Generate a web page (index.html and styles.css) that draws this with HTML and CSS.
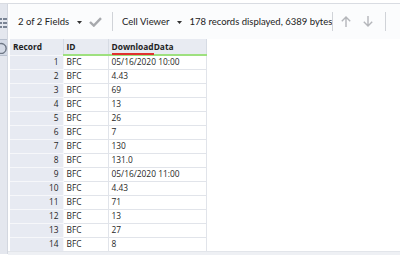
FILE: index.html
```html
<!DOCTYPE html>
<html lang="en">
<head>
  <meta charset="UTF-8" />
  <title>Results</title>
  <link rel="stylesheet" href="styles.css">
</head>
<body>
  <div class="app">
    <div class="sidebar">
      <span class="side-btn">
        <svg width="8" height="11" viewBox="0 0 8 11"><g fill="#7a8494"><rect x="0" y="0" width="3" height="2"/><rect x="4" y="0" width="4" height="2"/><rect x="0" y="4" width="3" height="2"/><rect x="4" y="4" width="4" height="2"/><rect x="0" y="8" width="3" height="2"/><rect x="4" y="8" width="4" height="2"/></g></svg>
      </span>
      <span class="side-btn active">
        <svg width="8" height="12" viewBox="0 0 8 12"><path d="M0 2 A5 5 0 1 1 0 11" fill="none" stroke="#6f7886" stroke-width="1.4"/></svg>
      </span>
    </div>

    <div class="main">
      <div class="toolbar">
        <span class="tb-text">2 of 2 Fields</span>
        <svg class="caret" width="5" height="3" viewBox="0 0 5 3"><path d="M0 0 H5 L2.5 3 Z" fill="#333"/></svg>
        <svg class="check" width="13" height="10" viewBox="0 0 13 10"><path d="M1 5 L4.8 8.6 L12 1.2" fill="none" stroke="#a7a9ad" stroke-width="2.4"/></svg>
        <span class="sep"></span>
        <span class="tb-text">Cell Viewer</span>
        <svg class="caret" width="5" height="3" viewBox="0 0 5 3"><path d="M0 0 H5 L2.5 3 Z" fill="#333"/></svg>
        <span class="tb-text">178 records displayed, 6389 bytes</span>
        <span class="sep"></span>
        <svg class="arrow up" width="10" height="11" viewBox="0 0 10 11"><path d="M5 11 V1 M0.8 5.2 L5 1 L9.2 5.2" fill="none" stroke="#b4b6ba" stroke-width="1.4"/></svg>
        <svg class="arrow" width="10" height="11" viewBox="0 0 10 11"><path d="M5 0 V10 M0.8 5.8 L5 10 L9.2 5.8" fill="none" stroke="#b4b6ba" stroke-width="1.4"/></svg>
        <span class="sep last"></span>
      </div>

      <table class="grid">
        <thead>
          <tr>
            <th class="rec">Record</th>
            <th class="col ok">ID</th>
            <th class="col ok"><span class="warn">Download</span>Data</th>
          </tr>
        </thead>
        <tbody>
          <tr><td class="rec">1</td><td>BFC</td><td>05/16/2020 10:00</td></tr>
          <tr><td class="rec">2</td><td>BFC</td><td>4.43</td></tr>
          <tr><td class="rec">3</td><td>BFC</td><td>69</td></tr>
          <tr><td class="rec">4</td><td>BFC</td><td>13</td></tr>
          <tr><td class="rec">5</td><td>BFC</td><td>26</td></tr>
          <tr><td class="rec">6</td><td>BFC</td><td>7</td></tr>
          <tr><td class="rec">7</td><td>BFC</td><td>130</td></tr>
          <tr><td class="rec">8</td><td>BFC</td><td>131.0</td></tr>
          <tr><td class="rec">9</td><td>BFC</td><td>05/16/2020 11:00</td></tr>
          <tr><td class="rec">10</td><td>BFC</td><td>4.43</td></tr>
          <tr><td class="rec">11</td><td>BFC</td><td>71</td></tr>
          <tr><td class="rec">12</td><td>BFC</td><td>13</td></tr>
          <tr><td class="rec">13</td><td>BFC</td><td>27</td></tr>
          <tr><td class="rec">14</td><td>BFC</td><td>8</td></tr>
        </tbody>
      </table>
    </div>
  </div>
  <div class="hscroll"></div>
</body>
</html>
```

FILE: styles.css
```css
* {
  box-sizing: border-box;
}

html, body {
  margin: 0;
  padding: 0;
  height: 100%;
  overflow: hidden;
  background: #fff;
  font-family: 'Open Sans', 'Noto Sans', sans-serif;
  color: #1f1f1f;
}

.app {
  display: flex;
  height: 251px;
  border-top: 1px solid #d9dce2;
  margin-top: 3px;
}

.sidebar {
  width: 8px;
  background: #e4e7ee;
  border-right: 1px solid #d3d7df;
  display: flex;
  flex-direction: column;
  align-items: flex-end;
  padding-top: 12px;
  gap: 9px;
}

.side-btn {
  display: flex;
  align-items: center;
  justify-content: flex-end;
  width: 8px;
  height: 14px;
}

.side-btn.active {
  height: 17px;
  background: #d4dae6;
  border-top: 1px solid #b9c1cf;
  border-bottom: 1px solid #b9c1cf;
}

.main {
  flex: 1;
  display: flex;
  flex-direction: column;
  padding-left: 2px;
}

.toolbar {
  height: 35px;
  display: flex;
  align-items: center;
  padding-left: 8px;
  background: #fbfcfd;
  font-family: Lato, 'Open Sans', sans-serif;
  font-size: 9.5px;
  color: #222;
}

.tb-text {
  white-space: nowrap;
}

.caret {
  margin: 1px 7px 0 8px;
  flex: none;
}

.check {
  margin: 0 10px 0 0;
  flex: none;
}

.sep {
  width: 1px;
  height: 19px;
  background: #d0d3d8;
  margin: 0 9px 0 0;
  flex: none;
}

.arrow {
  flex: none;
  margin-right: 12px;
}

.arrow.up {
  margin-left: -1px;
}

.grid {
  border-collapse: collapse;
  font-size: 8.4px;
  width: 197px;
  table-layout: fixed;
}

.grid th {
  height: 16px;
  text-align: left;
  font-weight: 700;
  background: #e8ebf2;
  padding: 0 0 0 3px;
  border-right: 1px solid #d6dbe4;
  white-space: nowrap;
}

.grid th.rec {
  width: 53px;
}

.grid th.col {
  border-bottom: 2px solid #9ee07f;
}

.grid th:nth-child(2) {
  width: 45px;
}

.warn {
  border-bottom: 2px solid #e03030;
  margin-bottom: -3px;
  display: inline-block;
  line-height: 12px;
}

.grid td {
  height: 14px;
  padding: 0 0 0 3px;
  border: 1px solid #e1e4ea;
  white-space: nowrap;
  line-height: 12px;
}

.grid td.rec {
  background: #e7eaf2;
  border-color: #f6f7fa;
  border-left: none;
  text-align: right;
  padding: 0 4px 0 0;
}

.hscroll {
  position: absolute;
  left: 8px;
  right: 0;
  bottom: 0;
  height: 4px;
  background: #eef0f4;
  border-top: 1px solid #e2e5ea;
}
```
